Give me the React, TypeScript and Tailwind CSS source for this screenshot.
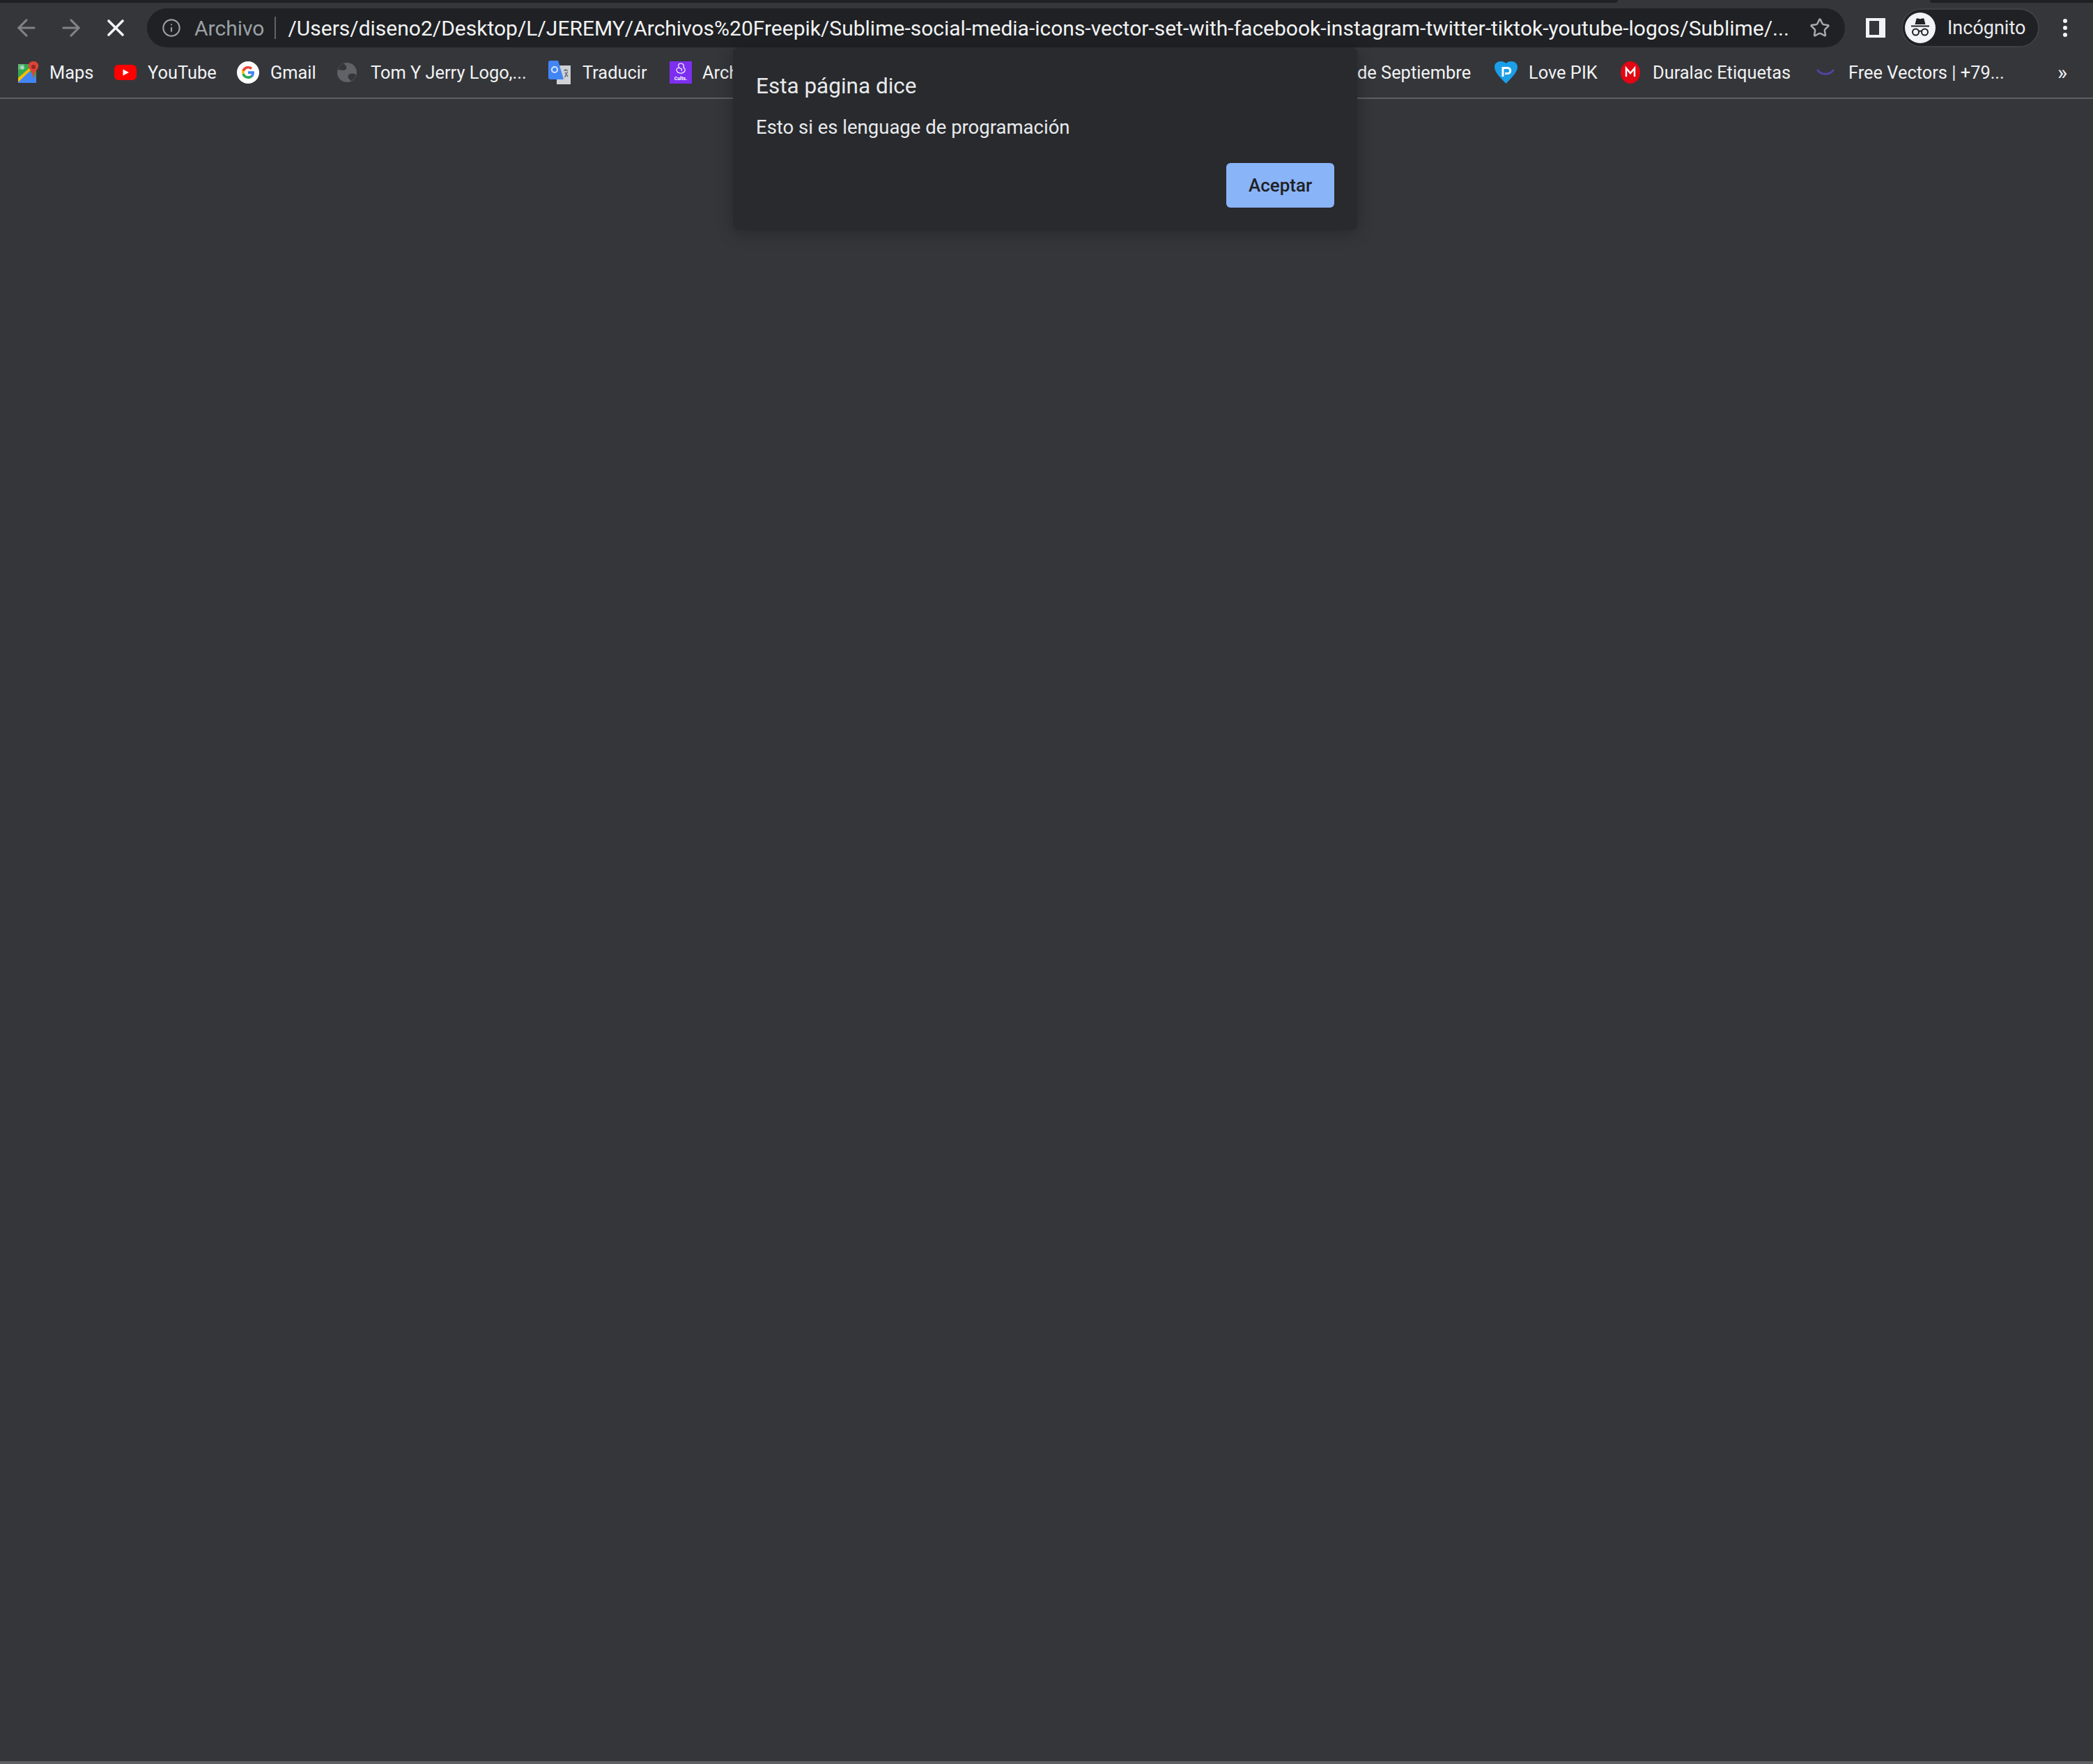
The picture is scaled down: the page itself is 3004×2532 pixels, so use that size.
import { ArrowLeft, ArrowRight, X, Info, Star } from "lucide-react"
import type { ReactNode } from "react"

const font = "font-['Roboto','Liberation_Sans',sans-serif]"

function MapsIcon() {
  return (
    <svg width="30" height="32" viewBox="0 0 30 32">
      <rect x="0" y="4" width="26" height="27" fill="#34a853" />
      <path d="M0 27 L15 13 L26 24 L26 31 L0 31Z" fill="#4285f4" />
      <path d="M0 24 L18 8 L20 11 L0 30Z" fill="#fbbc04" />
      <path d="M0 4 L10 4 L0 13Z" fill="#5fb97a" />
      <circle cx="6" cy="9" r="3" fill="#a8d8b5" />
      <path d="M22 0 C16 0 14 5 15 8 C16 12 21 15 22 26 C23 15 28 12 29 8 C30 5 28 0 22 0Z" fill="#db4437" />
      <circle cx="22" cy="8" r="3" fill="#8f2a21" />
    </svg>
  )
}

function YoutubeIcon() {
  return (
    <svg width="32" height="22" viewBox="0 0 32 22">
      <rect width="32" height="22" rx="6" fill="#ff0000" />
      <path d="M12.5 6.5 L21 11 L12.5 15.5Z" fill="#fff" />
    </svg>
  )
}

function GoogleIcon() {
  return (
    <svg width="32" height="32" viewBox="0 0 32 32">
      <circle cx="16" cy="16" r="16" fill="#fff" />
      <path d="M25 16.2c0-.7-.1-1.300-.2-1.900H16v3.600h5.100c-.2 1.200-.9 2.200-1.900 2.800v2.400h3c1.800-1.600 2.800-4 2.800-6.900z" fill="#4285f4" />
      <path d="M16 25c2.500 0 4.600-.8 6.200-2.300l-3-2.400c-.8.600-1.900.900-3.200.900-2.400 0-4.500-1.600-5.200-3.800H7.700v2.400C9.200 23 12.400 25 16 25z" fill="#34a853" />
      <path d="M10.800 17.400c-.4-1.200-.4-2.600 0-3.800v-2.400H7.700c-1 2.100-1 4.500 0 6.600z" fill="#fbbc04" />
      <path d="M16 10.600c1.400 0 2.600.5 3.500 1.400l2.700-2.700C20.600 7.800 18.500 7 16 7c-3.600 0-6.800 2-8.300 5.200l3.100 2.400c.7-2.300 2.800-4 5.200-4z" fill="#ea4335" />
    </svg>
  )
}

function GlobeIcon() {
  return (
    <svg width="28" height="28" viewBox="0 0 28 28">
      <circle cx="14" cy="14" r="14" fill="#5f6368" />
      <path d="M9 1 C13 4 15 7 12 10 C9 12 5 10 1 10 C2 6 5 3 9 1Z" fill="#35363a" />
      <path d="M27 17 C23 15 18 15 16 18 C14 21 17 24 20 26 C24 24 26 21 27 17Z" fill="#35363a" />
    </svg>
  )
}

function TranslateIcon() {
  return (
    <svg width="32" height="34" viewBox="0 0 32 34">
      <rect x="12" y="7" width="20" height="27" fill="#cfd2d6" />
      <path d="M22 14h6M25 12v2M23.500 24l4-8M24 17l4 6" stroke="#6b6f75" strokeWidth="1.500" fill="none" />
      <path d="M0 3 Q0 0 3 0 H14 L22 27 H3 Q0 27 0 24Z" fill="#4285f4" />
      <circle cx="9" cy="13" r="4" fill="none" stroke="#d8e6fb" strokeWidth="2" />
    </svg>
  )
}

function CultsIcon() {
  return (
    <div className="flex h-8 w-8 flex-col items-center justify-center bg-[#7c2ff0]">
      <svg width="16" height="18" viewBox="0 0 16 18" fill="none" stroke="#fff" strokeWidth="1.200">
        <path d="M8 1 C4 1 4 6 6 7 C2 7 1 11 3 13 C5 15 9 16 12 14 C15 12 15 8 12 7 C13 4 12 1 8 1Z" />
        <path d="M5 7 C8 8 11 9 9 12" />
      </svg>
      <span className="mt-[1px] text-[7px] leading-[8px] font-bold text-white">Cults.</span>
    </div>
  )
}

function LovePikIcon() {
  return (
    <svg width="33" height="32" viewBox="0 0 33 32">
      <path d="M16.500 32 C9 24 0 16 0 8 C0 3 4 0 9 0 C12 0 15 1 16.500 3 C18 1 21 0 24 0 C29 0 33 3 33 8 C33 16 24 24 16.500 32Z" fill="#1a9fe8" />
      <path d="M12 22 V9.500 H19 C24 9.500 24 17.500 19 17.500 H15" fill="none" stroke="#fff" strokeWidth="3" />
    </svg>
  )
}

function DuralacIcon() {
  return (
    <svg width="28" height="32" viewBox="0 0 28 32">
      <ellipse cx="14" cy="16" rx="14" ry="16" fill="#e30613" />
      <path d="M8 22 V10 L14 17 L20 10 V22" fill="none" stroke="#fff" strokeWidth="2.500" />
    </svg>
  )
}

function FreeVectorsIcon() {
  return (
    <svg width="26" height="12" viewBox="0 0 26 12">
      <path d="M2 3 C7 10 19 10 24 3" fill="none" stroke="#4f46a5" strokeWidth="3" strokeLinecap="round" />
    </svg>
  )
}

function IncognitoIcon() {
  return (
    <svg width="44" height="44" viewBox="0 0 44 44">
      <circle cx="22" cy="22" r="22" fill="#f1f3f4" />
      <path d="M14.500 17 L16.500 9 Q17 8 18 8.300 L22 9.300 L26 8.300 Q27 8 27.500 9 L29.500 17Z" fill="#202124" />
      <rect x="9" y="18.500" width="26" height="2" fill="#202124" />
      <circle cx="15.500" cy="28" r="4.500" fill="none" stroke="#202124" strokeWidth="2" />
      <circle cx="28.500" cy="28" r="4.500" fill="none" stroke="#202124" strokeWidth="2" />
      <path d="M20 27 Q22 25.800 24 27" fill="none" stroke="#202124" strokeWidth="2" />
    </svg>
  )
}

type Bookmark = { label: string; icon?: ReactNode; width: string; slot: string }

const bookmarks: Bookmark[] = [
  { label: "Maps", icon: <MapsIcon />, width: "w-[138px]", slot: "w-[45px]" },
  { label: "YouTube", icon: <YoutubeIcon />, width: "w-[176px]", slot: "w-[48px]" },
  { label: "Gmail", icon: <GoogleIcon />, width: "w-[144px]", slot: "w-[48px]" },
  { label: "Tom Y Jerry Logo,...", icon: <GlobeIcon />, width: "w-[303px]", slot: "w-[48px]" },
  { label: "Traducir", icon: <TranslateIcon />, width: "w-[174px]", slot: "w-[49px]" },
  { label: "Archivos", icon: <CultsIcon />, width: "w-[987px]", slot: "w-[47px]" },
  { label: "de Septiembre", width: "w-[197px]", slot: "w-0" },
  { label: "Love PIK", icon: <LovePikIcon />, width: "w-[181px]", slot: "w-[49px]" },
  { label: "Duralac Etiquetas", icon: <DuralacIcon />, width: "w-[281px]", slot: "w-[46px]" },
  { label: "Free Vectors | +79...", icon: <FreeVectorsIcon />, width: "w-[328px]", slot: "w-[46px]" },
]

export default function App() {
  return (
    <div className={`relative flex min-h-screen flex-col bg-[#35363a] ${font}`}>
      {/* tab strip remainder */}
      <div className="flex h-[4px] shrink-0">
        <div className="w-[2322px] rounded-br-[4px] bg-[#202124]" />
        <div className="w-[448px]" />
        <div className="flex-1 rounded-bl-[4px] bg-[#202124]" />
      </div>

      {/* toolbar */}
      <div className="flex h-[64px] shrink-0 items-center pb-0 pt-[8px] pl-[20px]">
        <ArrowLeft size={38} strokeWidth={2} className="-ml-[1px] text-[#808285]" />
        <ArrowRight size={38} strokeWidth={2} className="ml-[26px] text-[#808285]" />
        <X size={40} strokeWidth={2.2} className="ml-[25px] text-[#f1f3f4]" />
        <div className="ml-[25px] flex h-[56px] w-[2437px] items-center rounded-full bg-[#202124] pl-[21px]">
          <Info size={28} strokeWidth={1.8} className="text-[#9aa0a6]" />
          <span className="ml-[19px] text-[30px] text-[#9aa0a6]">Archivo</span>
          <div className="ml-[15px] h-[32px] w-[2px] bg-[#5f6368]" />
          <span className="ml-[17px] w-[2157px] whitespace-nowrap text-[30px] text-[#f1f3f4]">
            /Users/diseno2/Desktop/L/JEREMY/Archivos%20Freepik/Sublime-social-media-icons-vector-set-with-facebook-instagram-twitter-tiktok-youtube-logos/Sublime/...
          </span>
          <Star size={30} strokeWidth={2} className="ml-[27px] shrink-0 text-[#a9abad]" />
        </div>
        <div className="ml-[30px] h-[28px] w-[28px] border-y-[4px] border-r-[9px] border-l-[5px] border-[#f1f3f4] bg-[#35363a]" />
        <div className="ml-[23px] flex h-[56px] w-[198px] items-center rounded-full border-2 border-[#3f4044] bg-[#202124] pl-[3px]">
          <IncognitoIcon />
          <span className="ml-[17px] text-[27px] text-[#e8eaed]">Incógnito</span>
        </div>
        <div className="ml-[34px] flex flex-col gap-[4px]">
          <div className="h-[6px] w-[6px] rounded-full bg-[#f1f3f4]" />
          <div className="h-[6px] w-[6px] rounded-full bg-[#f1f3f4]" />
          <div className="h-[6px] w-[6px] rounded-full bg-[#f1f3f4]" />
        </div>
      </div>

      {/* bookmarks bar */}
      <div className="flex h-[74px] shrink-0 items-center border-b-2 border-[#5f6063] pl-[26px] text-[25.4px] text-[#f1f3f4]">
        {bookmarks.map((b) => (
          <div key={b.label} className={`flex shrink-0 items-center ${b.width}`}>
            <div className={`flex shrink-0 items-center ${b.slot}`}>{b.icon}</div>
            <span className="whitespace-nowrap">{b.label}</span>
          </div>
        ))}
        <span className="ml-[18px] text-[30px] leading-none">»</span>
      </div>

      <div className="flex-1" />
      <div className="h-[4px] shrink-0 bg-[#5f6063]" />

      {/* alert dialog */}
      <div className="absolute left-[1052px] top-[68px] flex h-[262px] w-[896px] flex-col rounded-[8px] bg-[#292a2d] pl-[33px] pr-[33px] pt-[38px] shadow-[0_4px_24px_rgba(0,0,0,0.28)]">
        <p className="text-[31.5px] leading-[36px] text-[#e8eaed]">Esta página dice</p>
        <p className="mt-[24px] text-[27.5px] leading-[34px] text-[#e8eaed]">Esto si es lenguage de programación</p>
        <div className="mt-[34px] flex justify-end">
          <button className="h-[64px] w-[155px] rounded-[6px] bg-[#8ab4f8] text-[26px] font-medium text-[#202124]">Aceptar</button>
        </div>
      </div>
    </div>
  )
}
